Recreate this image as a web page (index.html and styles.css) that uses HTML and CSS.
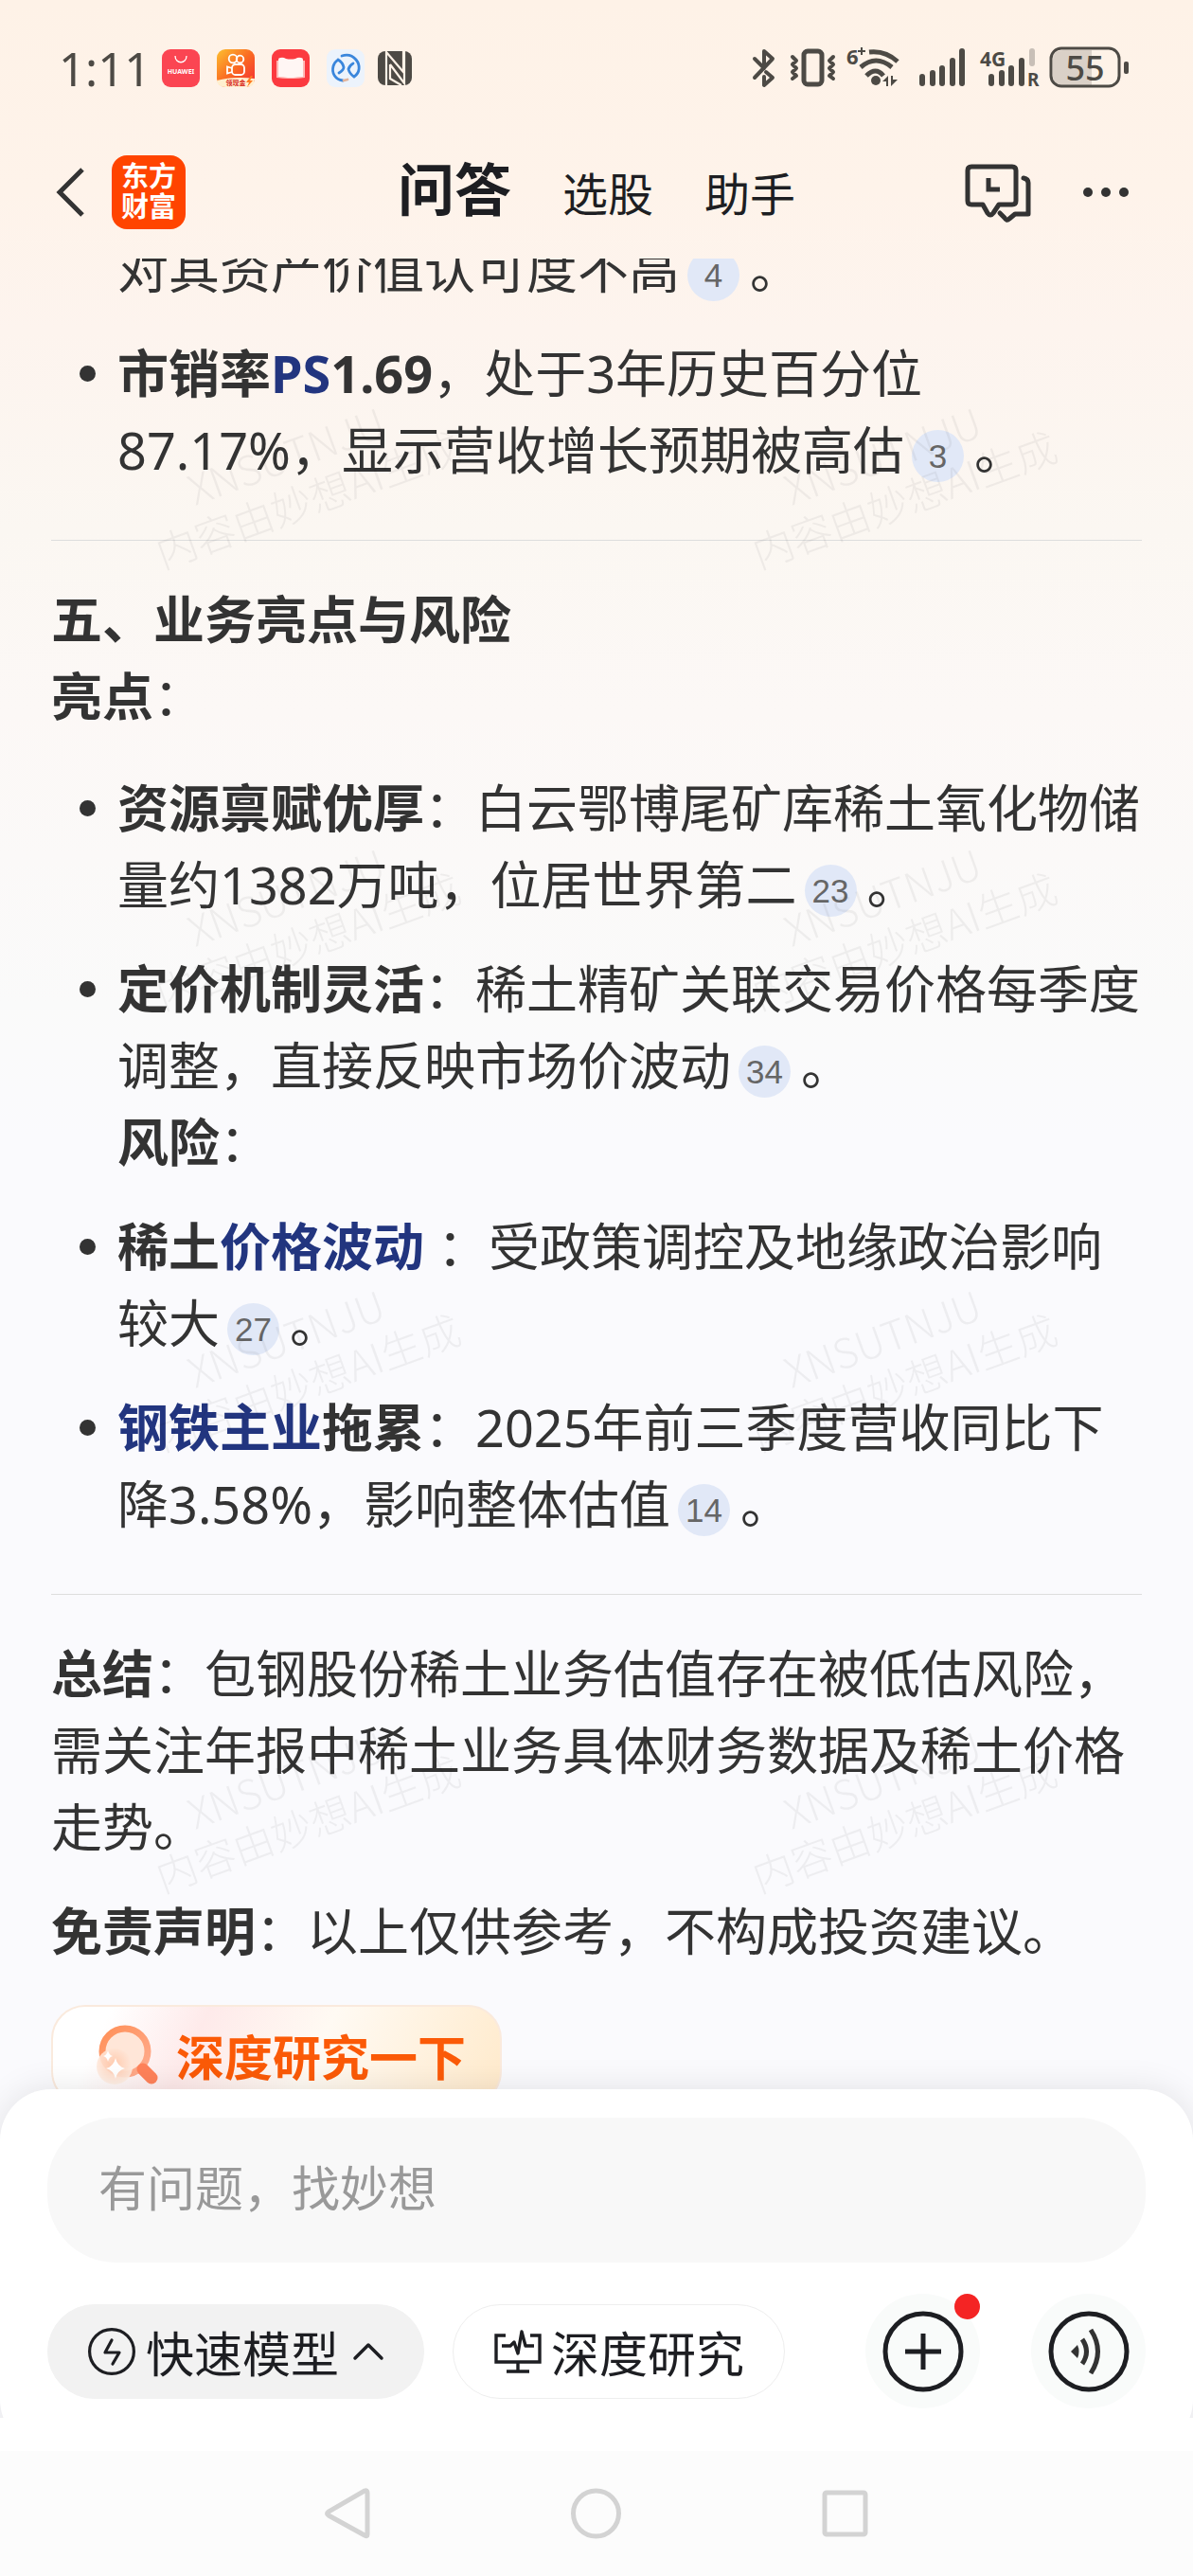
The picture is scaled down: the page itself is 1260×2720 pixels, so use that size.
FILE: index.html
```html
<!DOCTYPE html>
<html lang="zh-CN">
<head>
    <meta charset="utf-8">
    <meta name="viewport" content="width=device-width">
    <title>问答</title>
    <link rel="stylesheet" href="styles.css">
</head>
<body>
    <div class="statusbar">
        <div class="status-left">
            <span class="clock">1:11</span>
            <svg class="app-icon" viewBox="0 0 40 40">
                <rect width="40" height="40" rx="9" fill="#fb4552"/>
                <path d="M14 7c0 9 12 9 12 0" fill="none" stroke="#fff" stroke-width="1.3"/>
                <text x="20" y="26" font-size="7" font-weight="bold" fill="#fff" text-anchor="middle">HUAWEI</text>
            </svg>
            <svg class="app-icon" viewBox="0 0 40 40">
                <defs>
                    <linearGradient id="ks" x1="0" y1="0" x2="1" y2="1">
                        <stop offset="0" stop-color="#fdc030"/>
                        <stop offset=".5" stop-color="#fa6a22"/>
                        <stop offset="1" stop-color="#f32a36"/>
                    </linearGradient>
                </defs>
                <rect width="40" height="40" rx="9" fill="url(#ks)"/>
                <g fill="none" stroke="#fff" stroke-width="1.8">
                    <circle cx="17" cy="10" r="4.3"/>
                    <circle cx="24.5" cy="10.5" r="3.8"/>
                    <rect x="16" y="16" width="13" height="11" rx="3.5"/>
                    <path d="M16 20l-5-1.5v7l5-1.5"/>
                </g>
                <path d="M0 33q18-5 40-2q0 9-9 9H9q-8 0-9-7z" fill="#fff0cf"/>
                <text x="20" y="38" font-size="7" font-weight="bold" fill="#d8281c" text-anchor="middle">领现金</text>
                <path d="M36 28l-5 7h3l-2 5 6-7h-3l3-5z" fill="#ff7a20"/>
            </svg>
            <svg class="app-icon" viewBox="0 0 40 40">
                <rect width="40" height="40" rx="9" fill="#fb3a40"/>
                <path d="M5 12h30v18q-7 1-12 1h-6q-5 0-12-1z" fill="#ffb9b6"/>
                <path d="M7 11q0-2 2-2 3-1 6 1 5 1 10 0 3-2 6-1 2 0 2 2v18q-6 0-10 1h-6q-4-1-10-1z" fill="#fff6f4"/>
            </svg>
            <svg class="app-icon" viewBox="0 0 40 40">
                <rect width="40" height="40" rx="9" fill="#ecf3fc"/>
                <g fill="none" stroke="#3a86dc" stroke-width="2.8" stroke-linecap="round">
                    <path d="M16 7q9-3 15 4c5 6 4 14-2 18-3-2-5-4-6-8 1-3 3-5 5-6"/>
                    <path d="M17 33c-8-1-12-8-10-15q1-4 5-7 5 3 6 8 0 3-5 6"/>
                </g>
                <path d="M18 33l4-1" stroke="#e2b39a" stroke-width="2.8" stroke-linecap="round"/>
            </svg>
            <svg class="nfc-icon" viewBox="0 0 36 36">
                <rect width="36" height="36" rx="8" fill="#4d4a45"/>
                <path d="M9 36V1l18 21V0M27 0v8M13 14l15 20V0M13 14v15l12 7" fill="none" stroke="#fef2e7" stroke-width="2.2"/>
            </svg>
        </div>
        <svg class="status-right" viewBox="0 0 400 44">
            <g fill="none" stroke="#4d4a45" stroke-width="4" stroke-linecap="round" stroke-linejoin="round">
                <path d="M1 12l10 10V4l9 8L1 32M13 26l7 6-9 8v-9"/>
                <rect x="53" y="4" width="19" height="35" rx="4" stroke-width="5"/>
                <path d="M41 10l4 4-4 4 4 4-4 4 4 4-4 3M84 10l-4 4 4 4-4 4 4 4-4 4 4 3" stroke-width="4"/>
            </g>
            <path d="M122 5q17-2 30 10M113 21q16-14 33 0M119 30q10-10 18 0" fill="none" stroke="#4d4a45" stroke-width="5"/>
            <g fill="#4d4a45">
                <circle cx="129" cy="35" r="5"/>
                <path d="M136 36l6-6v11h-2v-5zM145 30h2v4h5l-7 7z"/>
                <text x="98" y="18" font-size="22" font-weight="bold">6</text>
                <path d="M110 3h3v-3h2v3h3v2h-3v3h-2v-3h-3z"/>
                <rect x="175" y="28" width="6" height="13" rx="3"/>
                <rect x="186" y="24" width="6" height="17" rx="3"/>
                <rect x="196" y="19" width="6" height="22" rx="3"/>
                <rect x="207" y="11" width="6" height="30" rx="3"/>
                <rect x="217" y="1" width="6" height="40" rx="3"/>
                <text x="239" y="20" font-size="21" font-weight="bold">4G</text>
                <rect x="248" y="28" width="6" height="13" rx="3"/>
                <rect x="259" y="24" width="6" height="17" rx="3"/>
                <rect x="269" y="19" width="6" height="22" rx="3"/>
                <rect x="280" y="11" width="6" height="30" rx="3"/>
                <rect x="291" y="1" width="6" height="19" rx="3" opacity=".3"/>
                <text x="289" y="41" font-size="19" font-weight="bold">R</text>
                <path d="M326 3h31v38h-31q-10 0-10-10V13q0-10 10-10z" opacity=".2"/>
                <rect x="391" y="15" width="5" height="13" rx="2"/>
                <text x="350" y="35" font-size="36" font-weight="500" text-anchor="middle">55</text>
            </g>
            <rect x="314" y="1" width="72" height="40" rx="11" fill="none" stroke="#4d4a45" stroke-width="3"/>
        </svg>
    </div>

    <header class="header">
        <div class="header-left">
            <button class="icon-btn" aria-label="返回">
                <svg width="32" height="56" viewBox="0 0 32 56"><path d="M28 4L4 28l24 24" fill="none" stroke="#333" stroke-width="5"/></svg>
            </button>
            <div class="logo">东方<br>财富</div>
        </div>
        <nav class="tabs">
            <a class="tab active" href="#">问答</a>
            <a class="tab" href="#">选股</a>
            <a class="tab" href="#">助手</a>
        </nav>
        <div class="header-right">
            <button class="icon-btn" aria-label="历史">
                <svg width="70" height="60" viewBox="0 0 70 60" fill="none" stroke="#333" stroke-width="5" stroke-linejoin="round" stroke-linecap="round">
                    <path d="M7 3h43q4 0 4 4v32q0 4-4 4h-14l-6 9q-3 4-6 0l-5-9H7q-4 0-4-4V7q0-4 4-4z"/>
                    <path d="M25 15v12h12" stroke-linecap="butt" stroke-linejoin="miter"/>
                    <path d="M62 15q5 1 5 5v33h-14l-6 5q-3 3-5-1l-5-5"/>
                </svg>
            </button>
            <button class="icon-btn" aria-label="更多">
                <svg width="50" height="20" viewBox="0 0 50 20" fill="#333"><circle cx="6" cy="10" r="5"/><circle cx="25" cy="10" r="5"/><circle cx="44" cy="10" r="5"/></svg>
            </button>
        </div>
    </header>

    <main class="chat">
        <div class="answer">
            <ul>
                <li class="continued">对其资产价值认可度不高<span class="ref">4</span>。</li>
                <li><b>市销率<a href="#">PS</a>1.69</b>，处于3年历史百分位<br>87.17%，显示营收增长预期被高估<span class="ref">3</span>。</li>
            </ul>
            <hr>
            <p><b>五、业务亮点与风险</b><br><b>亮点</b>：</p>
            <ul>
                <li><b>资源禀赋优厚</b>：白云鄂博尾矿库稀土氧化物储量约1382万吨，位居世界第二<span class="ref">23</span>。</li>
                <li><b>定价机制灵活</b>：稀土精矿关联交易价格每季度调整，直接反映市场价波动<span class="ref">34</span>。<br><b>风险</b>：</li>
                <li><b>稀土<a href="#">价格波动</a></b> ：受政策调控及地缘政治影响较大<span class="ref">27</span>。</li>
                <li><b><a href="#">钢铁主业</a>拖累</b>：2025年前三季度营收同比下降3.58%，影响整体估值<span class="ref">14</span>。</li>
            </ul>
            <hr>
            <p><b>总结</b>：包钢股份稀土业务估值存在被低估风险，需关注年报中稀土业务具体财务数据及稀土价格走势。</p>
            <p class="disclaimer"><b>免责声明</b>：以上仅供参考，不构成投资建议。</p>
            <button class="research">
                <svg width="68" height="66" viewBox="0 0 68 66">
                    <defs>
                        <linearGradient id="lens" x1="0" y1="0" x2="1" y2="1">
                            <stop offset="0" stop-color="#ff9058"/>
                            <stop offset="1" stop-color="#ffad90"/>
                        </linearGradient>
                        <radialGradient id="bubble" cx=".5" cy=".4" r=".6">
                            <stop offset="0" stop-color="#ffc9ac"/>
                            <stop offset="1" stop-color="#fff0e6"/>
                        </radialGradient>
                    </defs>
                    <circle cx="32" cy="29" r="24" fill="#ffe6d8" stroke="url(#lens)" stroke-width="7"/>
                    <path d="M51 48l9 9" stroke="#ff8259" stroke-width="13" stroke-linecap="round"/>
                    <circle cx="21" cy="45" r="19" fill="url(#bubble)" opacity=".9"/>
                    <path d="M22 36q2 9 10 11-8 2-10 11-2-9-10-11 8-2 10-11zM14 28q1 5 5 6-4 1-5 6-1-5-5-6 4-1 5-6z" fill="#fff"/>
                </svg>
                深度研究一下
            </button>
        </div>
        <svg class="watermark" width="100%" height="100%" aria-hidden="true">
            <defs>
                <pattern id="wm" width="630" height="466" patternUnits="userSpaceOnUse">
                    <text transform="translate(206 261) rotate(-20)">XNSUTNJU</text>
                    <text transform="translate(172 328) rotate(-20)">内容由妙想AI生成</text>
                </pattern>
            </defs>
            <rect width="100%" height="100%" fill="url(#wm)"/>
        </svg>
    </main>

    <form class="composer">
        <input class="question" type="text" placeholder="有问题，找妙想" aria-label="有问题，找妙想">
        <div class="tools">
            <button type="button" class="chip chip-on">
                <svg width="50" height="50" viewBox="0 0 50 50" fill="none" stroke="#1d1e22" stroke-width="3.2" stroke-linejoin="round" stroke-linecap="round">
                    <circle cx="25" cy="25" r="23.4"/>
                    <path d="M25 13l-7 13h15l-7 12"/>
                </svg>
                快速模型
                <svg class="caret" width="32" height="20" viewBox="0 0 32 20" fill="none" stroke="#1d1e22" stroke-width="3.5" stroke-linecap="round" stroke-linejoin="round"><path d="M2 17L16 3l14 14"/></svg>
            </button>
            <button type="button" class="chip">
                <svg width="50" height="50" viewBox="0 0 50 50" fill="none" stroke="#1d1e22" stroke-width="3.4">
                    <path d="M13 8H3v28h46V8H39M26 36v10M14 46h24"/>
                    <path d="M9 19h9l4-4 4 12 4-23 4 15h9" stroke-linejoin="round"/>
                </svg>
                深度研究
            </button>
            <button type="button" class="round push" aria-label="添加">
                <svg width="86" height="86" viewBox="0 0 86 86" fill="none" stroke="#1d1e22" stroke-width="5">
                    <circle cx="43" cy="43" r="40"/>
                    <path d="M43 24v38M24 43h38"/>
                </svg>
                <span class="dot"></span>
            </button>
            <button type="button" class="round" aria-label="语音">
                <svg width="86" height="86" viewBox="0 0 86 86" fill="none" stroke="#333" stroke-width="5">
                    <circle cx="43" cy="43" r="40" stroke="#1d1e22"/>
                    <path d="M24 43l7-7q3 7 0 14z" fill="#333" stroke="none"/>
                    <path d="M36 30q9 13 0 26M45 20q15 23 0 46"/>
                </svg>
            </button>
        </div>
    </form>

    <div class="sysnav">
        <svg width="53" height="54" viewBox="0 0 53 54"><path d="M48 5v44q0 3-3 1L7 29q-3-2 0-4L45 3q3-1 3 2z"/></svg>
        <svg width="53" height="54" viewBox="0 0 53 54"><circle cx="26.5" cy="27" r="24"/></svg>
        <svg width="53" height="54" viewBox="0 0 53 54"><rect x="5" y="5" width="43" height="44" rx="2"/></svg>
    </div>
</body>
</html>
```
FILE: styles.css
```css
* {
    box-sizing: border-box;
}
body {
    margin: 0;
    height: 100vh;
    display: flex;
    flex-direction: column;
    overflow: hidden;
    font-family: "Noto Sans", "Noto Sans CJK SC", sans-serif;
    color: #333333;
    background: linear-gradient(#fef2e7 0, #fef3ea 200px, #fdf4ee 350px, #fbf7f2 560px, #fcf8f6 750px, #fafafa 1060px, #fafafd 1200px, #fafafd 100%);
}
button {
    font-family: inherit;
    border: none;
    background: none;
    padding: 0;
    cursor: pointer;
}
svg {
    display: block;
    flex: none;
    overflow: visible;
}

/* system status bar */
.statusbar {
    flex: none;
    height: 132px;
    padding: 12px 64px 0 62px;
    display: flex;
    align-items: center;
    justify-content: space-between;
}
.status-left {
    display: flex;
    align-items: center;
}
.clock {
    margin-right: 12px;
    font-size: 49px;
    line-height: 60px;
    color: #4d4a45;
}
.app-icon {
    width: 40px;
    height: 40px;
    margin-right: 18px;
}
.app-icon:nth-last-child(2) {
    margin-right: 14px;
}
.nfc-icon {
    width: 36px;
    height: 36px;
}
.status-right {
    width: 400px;
    height: 44px;
}

/* header */
.header {
    flex: none;
    height: 141px;
    padding: 0 67px 0 59px;
    display: grid;
    grid-template-columns: 1fr auto 1fr;
    align-items: center;
}
.header-left, .header-right {
    display: flex;
    align-items: center;
}
.header-left {
    gap: 27px;
}
.header-right {
    justify-content: flex-end;
    gap: 54px;
}
.logo {
    width: 78px;
    height: 78px;
    border-radius: 16px;
    background: #ff4400;
    color: #ffffff;
    font-size: 29px;
    line-height: 32px;
    font-weight: bold;
    text-align: center;
    padding-top: 6px;
}
.tabs {
    display: flex;
    align-items: baseline;
    gap: 54px;
    padding-left: 8px;
}
.tab {
    font-size: 48px;
    line-height: 72px;
    color: #1d1e22;
    text-decoration: none;
}
.tab.active {
    font-size: 60px;
    font-weight: bold;
}

/* answer */
.chat {
    flex: 1;
    min-height: 0;
    overflow: hidden;
    position: relative;
}
.answer {
    margin-top: -29px;
    padding: 0 54px;
    font-size: 54px;
    line-height: 81px;
}
.answer ul {
    margin: 0;
    padding-left: 70px;
    list-style: none;
}
.answer li {
    position: relative;
}
.answer li::before {
    content: "";
    position: absolute;
    top: 32px;
    left: -40px;
    width: 17px;
    height: 17px;
    border-radius: 50%;
    background: #333333;
}
.answer .continued::before {
    display: none;
}
.answer li + li {
    margin-top: 29px;
}
.answer p {
    margin: 0 0 37px;
}
.answer p + .disclaimer {
    margin-top: -8px;
}
.answer a {
    color: #22357f;
    text-decoration: none;
}
.answer hr {
    margin: 54px 0 43px;
    border: none;
    border-top: 1px solid #dddddd;
}
.ref {
    display: inline-block;
    width: 55px;
    height: 55px;
    margin: 0 11px 0 8px;
    border-radius: 50%;
    background: #e1e8f7;
    color: #666666;
    font-family: "Liberation Sans", sans-serif;
    font-size: 35px;
    line-height: 55px;
    text-align: center;
    vertical-align: middle;
}
.research {
    display: flex;
    align-items: center;
    gap: 18px;
    height: 106px;
    padding: 0 36px 0 44px;
    border: 2px solid #faeadd;
    border-radius: 36px;
    background: linear-gradient(115deg, #ffffff 12%, #feeaea 32%, #fffaf3 58%, #ffeacb 100%);
    color: #fb5a07;
    font-size: 51px;
    font-weight: bold;
}
.watermark {
    position: absolute;
    top: 0;
    left: 0;
    pointer-events: none;
}
.watermark text {
    font-family: "Noto Sans CJK SC", sans-serif;
    font-size: 43px;
    font-weight: 300;
    fill: rgba(0, 0, 0, 0.05);
}

/* input panel */
.composer {
    flex: none;
    position: relative;
    padding: 30px 50px 45px;
    border-radius: 54px;
    background: #ffffff;
    box-shadow: 0 0 36px rgba(0, 0, 0, 0.1);
}
/* squares off the bottom corners */
.composer::after {
    content: "";
    position: absolute;
    left: 0;
    right: 0;
    bottom: 0;
    height: 35px;
    background: #ffffff;
}
.question {
    display: block;
    width: 100%;
    height: 153px;
    padding: 0 54px 6px;
    border: none;
    border-radius: 72px;
    background: #f8f8f8;
    font-family: inherit;
    font-size: 51px;
    color: #1d1e22;
    outline: none;
}
.question::placeholder {
    color: #999999;
    opacity: 1;
}
.tools {
    display: flex;
    align-items: center;
    margin-top: 33px;
}
.chip {
    display: flex;
    align-items: center;
    gap: 11px;
    height: 100px;
    padding: 0 42px;
    margin-right: 30px;
    border: 1px solid #eeeeee;
    border-radius: 50px;
    background: #ffffff;
    color: #1d1e22;
    font-size: 51px;
    white-space: nowrap;
}
.chip-on {
    border-color: #f2f2f2;
    background: #f2f2f2;
}
.caret {
    margin-left: 4px;
}
.round {
    position: relative;
    display: flex;
    align-items: center;
    justify-content: center;
    width: 121px;
    height: 121px;
    border-radius: 50%;
    background: #f9fbfa;
}
.push {
    margin-left: auto;
    margin-right: 54px;
}
.dot {
    position: absolute;
    top: 0;
    right: 0;
    width: 27px;
    height: 27px;
    border-radius: 50%;
    background: #f42424;
}

/* system navigation */
.sysnav {
    flex: none;
    position: relative;
    height: 132px;
    display: flex;
    align-items: center;
    justify-content: center;
    gap: 210px;
    padding-right: 2px;
    background: #fcfcfc;
}
.sysnav svg {
    fill: none;
    stroke: #d3d3d3;
    stroke-width: 5px;
}
```
